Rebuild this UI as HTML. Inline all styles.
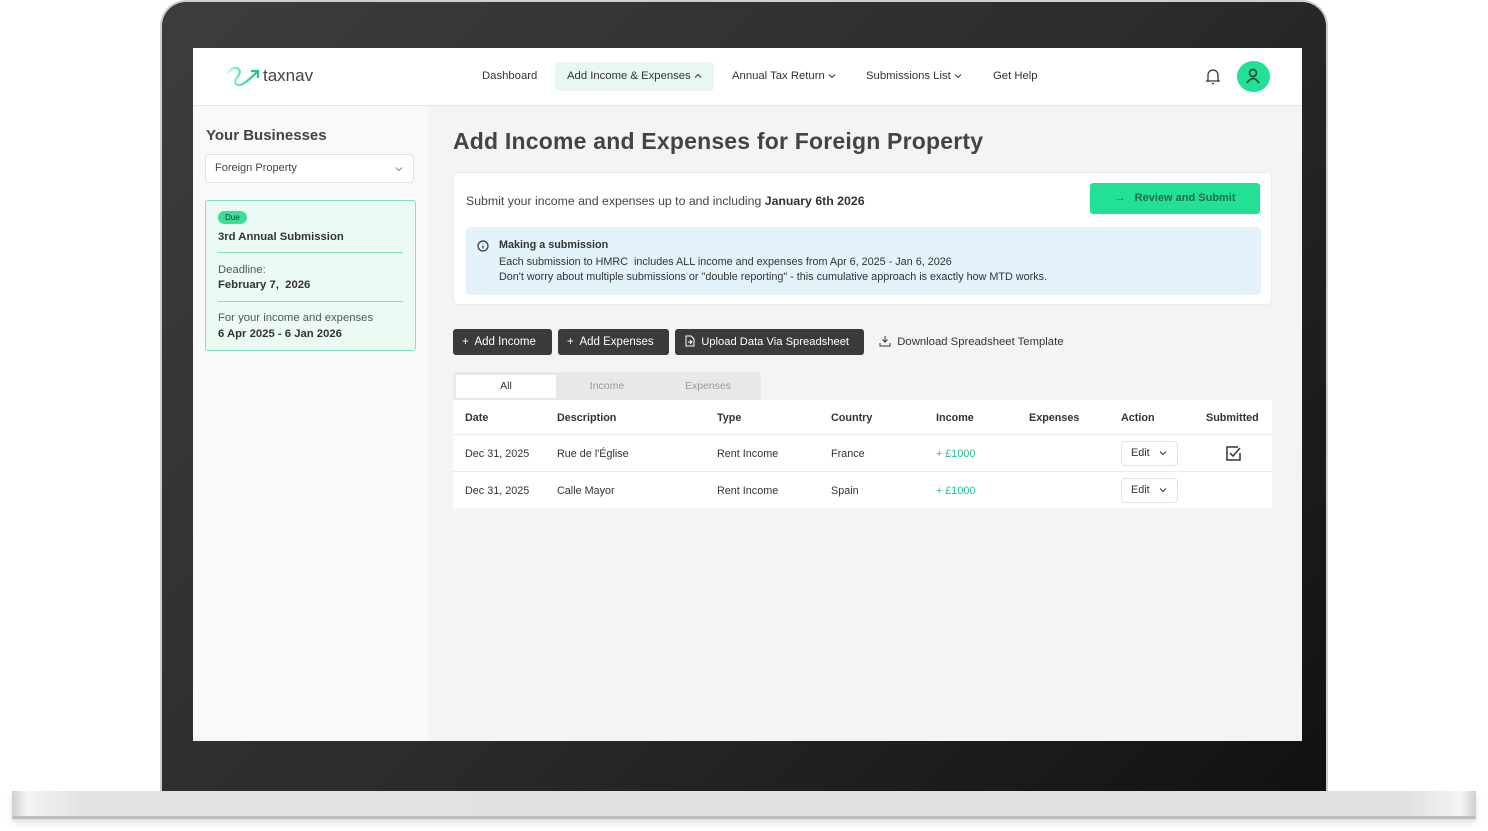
<!DOCTYPE html>
<html><head><meta charset="utf-8"><style>
*{box-sizing:border-box;margin:0;padding:0}
body{width:1488px;height:831px;background:#fff;position:relative;overflow:hidden;font-family:"Liberation Sans",sans-serif;color:#333}
.frame{position:absolute;left:160px;top:0;width:1168px;height:800px;border-radius:26px 26px 0 0;background:linear-gradient(135deg,#3d3d3d 0%,#2c2c2c 50%,#111 100%);border:2px solid #cfcfcf;border-bottom:none}
.base{position:absolute;left:12px;top:791px;width:1464px;height:28px;background:linear-gradient(90deg,#cfcfcf 0%,#f4f4f4 1%,#e2e2e2 5%,#e0e0e0 95%,#f4f4f4 99%,#cfcfcf 100%);border-bottom:3px solid #bdbdbd;box-shadow:0 4px 6px rgba(0,0,0,.12)}
.screen{position:absolute;left:193px;top:48px;width:1109px;height:693px;background:#f4f4f4;overflow:hidden}
.top{position:absolute;left:0;top:0;width:1109px;height:58px;background:#fff;border-bottom:1px solid #e5e5e5}
.logo{position:absolute;left:30px;top:12px}
.logotxt{position:absolute;left:70px;top:18px;font-size:17px;color:#444}
.nav{position:absolute;top:14px;font-size:11.3px;color:#333;height:29px;line-height:29px;white-space:nowrap}
.nav.act{background:#e8f8f1;border-radius:4px;padding:0 12px}
.chev{display:inline-block;vertical-align:middle;margin-left:3px}
.side{position:absolute;left:0;top:58px;width:235px;height:635px;background:#f9f9f9}
.h{font-weight:bold;font-size:15px;color:#444;position:absolute;left:13px;top:21px}
.sel{position:absolute;left:12px;top:48px;width:209px;height:29px;background:#fff;border:1px solid #e3e3e3;border-radius:4px;font-size:11px;line-height:27px;padding-left:9px;color:#444}
.card{position:absolute;left:12px;top:94px;width:211px;height:151px;background:#ebfaf3;border:1px solid #7ee3bb;border-radius:3px}
.badge{position:absolute;left:12px;top:10px;background:#3ddc97;border-radius:8px;font-size:8px;padding:2px 7px;color:#144}
.card .t{position:absolute;left:12px;font-size:11.3px}
.hr{position:absolute;left:12px;width:185px;height:1px;background:#7ee3bb}
.main{position:absolute;left:235px;top:58px;width:874px;height:635px}
.title{position:absolute;left:25px;top:22px;font-size:23px;font-weight:bold;color:#444;letter-spacing:.2px}
.box{position:absolute;left:25px;top:66px;width:819px;height:133px;background:#fff;border:1px solid #ebebeb;border-radius:5px}
.btnG{position:absolute;left:636px;top:10px;width:170px;height:31px;background:#22e096;border-radius:3px;font-size:11px;font-weight:bold;color:#2a6a50;line-height:31px;text-align:center}
.info{position:absolute;left:12px;top:54px;width:795px;height:68px;background:#e3f2fb;border-radius:4px;font-size:10.8px;color:#333}
.b{position:absolute;top:223px;height:26px;background:#3b3b3b;border-radius:3px;color:#fff;font-size:11.5px;line-height:26px;padding:0 9px;white-space:nowrap;overflow:hidden}
.tabs{position:absolute;left:25px;top:266px;width:308px;height:28px;background:#e8e8e8;border-radius:4px 4px 0 0}
.tab{position:absolute;top:3px;height:23px;width:100px;text-align:center;font-size:10.5px;line-height:23px;color:#999}
.tbl{position:absolute;left:25px;top:294px;width:819px;height:108px;background:#fff}
.row{position:absolute;left:0;width:819px;font-size:10.8px;color:#333;white-space:nowrap}
.row span{position:absolute}
.th{font-weight:bold;font-size:10.8px}
.edit{position:absolute;width:57px;height:25px;border:1px solid #e3e3e3;border-radius:4px;font-size:10.8px;line-height:23px;padding-left:9px}
</style></head><body>
<div class="frame"></div>
<div class="base"></div>
<div class="screen">
 <div class="top">
  <svg class="logo" width="40" height="30" viewBox="0 0 40 30"><defs><linearGradient id="g" x1="0" x2="1"><stop offset="0" stop-color="#3ddc97" stop-opacity="0"/><stop offset=".4" stop-color="#6ee8b4"/><stop offset="1" stop-color="#22c583"/></linearGradient></defs><path d="M2 16 Q10 6 14 8 Q20 11 13 19 Q10 25 17 25 Q22 24 34 12" fill="none" stroke="url(#g)" stroke-width="2.2" stroke-linecap="round"/><path d="M28 11 L35 11 L35 18" fill="none" stroke="#22c583" stroke-width="2.2"/></svg>
  <div class="logotxt">taxnav</div>
  <div class="nav" style="left:289px">Dashboard</div>
  <div class="nav act" style="left:362px">Add Income &amp; Expenses<svg class="chev" width="8" height="6" viewBox="0 0 8 6"><path d="M1 4.5L4 1.5L7 4.5" fill="none" stroke="#333" stroke-width="1"/></svg></div>
  <div class="nav" style="left:539px">Annual Tax Return<svg class="chev" width="8" height="6" viewBox="0 0 8 6"><path d="M1 1.5L4 4.5L7 1.5" fill="none" stroke="#333" stroke-width="1"/></svg></div>
  <div class="nav" style="left:673px">Submissions List<svg class="chev" width="8" height="6" viewBox="0 0 8 6"><path d="M1 1.5L4 4.5L7 1.5" fill="none" stroke="#333" stroke-width="1"/></svg></div>
  <div class="nav" style="left:800px">Get Help</div>
  <svg style="position:absolute;left:1010px;top:18px" width="20" height="20" viewBox="0 0 20 20"><path d="M5 14 V9 a5 5 0 0 1 10 0 V14 L16 15 H4 Z M9 17.5 h2" fill="none" stroke="#333" stroke-width="1.3"/></svg>
  <div style="position:absolute;left:1044px;top:13px;width:33px;height:31px;border-radius:50%;background:#22e096"></div>
  <svg style="position:absolute;left:1050px;top:18px" width="20" height="20" viewBox="0 0 20 20"><circle cx="10" cy="7" r="3.5" fill="none" stroke="#1c3b2f" stroke-width="1.5"/><path d="M4 17 q6 -9 12 0" fill="none" stroke="#1c3b2f" stroke-width="1.5"/></svg>
 </div>
 <div class="side">
  <div class="h">Your Businesses</div>
  <div class="sel">Foreign Property<svg style="position:absolute;right:10px;top:11px" width="8" height="6" viewBox="0 0 8 6"><path d="M1 1.5L4 4.5L7 1.5" fill="none" stroke="#888" stroke-width="1"/></svg></div>
  <div class="card">
   <div class="badge">Due</div>
   <div class="t" style="top:30px;font-weight:bold">3rd Annual Submission</div>
   <div class="hr" style="top:51px"></div>
   <div class="t" style="top:63px;color:#555">Deadline:</div>
   <div class="t" style="top:78px;font-weight:bold">February 7,&nbsp; 2026</div>
   <div class="hr" style="top:100px"></div>
   <div class="t" style="top:111px;color:#555">For your income and expenses</div>
   <div class="t" style="top:127px;font-weight:bold">6 Apr 2025 - 6 Jan 2026</div>
  </div>
 </div>
 <div class="main">
  <div class="title">Add Income and Expenses for Foreign Property</div>
  <div class="box">
   <div style="position:absolute;left:12px;top:21px;font-size:12.3px;color:#444">Submit your income and expenses up to and including <b style="color:#333">January 6th 2026</b></div>
   <div class="btnG">→&nbsp;&nbsp; Review and Submit</div>
   <div class="info">
    <svg style="position:absolute;left:11px;top:13px" width="12" height="12" viewBox="0 0 12 12"><circle cx="6" cy="6" r="5" fill="none" stroke="#333" stroke-width="1.2"/><path d="M6 5.5v3M6 3.5v.5" stroke="#333" stroke-width="1.2"/></svg>
    <div style="position:absolute;left:33px;top:12px;font-weight:bold">Making a submission</div>
    <div style="position:absolute;left:33px;top:29px">Each submission to HMRC&nbsp; includes ALL income and expenses from Apr 6, 2025 - Jan 6, 2026</div>
    <div style="position:absolute;left:33px;top:44px">Don't worry about multiple submissions or "double reporting" - this cumulative approach is exactly how MTD works.</div>
   </div>
  </div>
  <div class="b" style="left:25px;width:99px">+&nbsp; Add Income</div>
  <div class="b" style="left:130px;width:111px">+&nbsp; Add Expenses</div>
  <div class="b" style="left:247px;width:189px;font-size:11.2px"><svg width="11" height="12" viewBox="0 0 11 12" style="vertical-align:-2px"><path d="M2 1h5l3 3v7H2z M4 7h4M6 5l2 2-2 2" fill="none" stroke="#fff" stroke-width="1"/></svg>&nbsp; Upload Data Via Spreadsheet</div>
  <div style="position:absolute;left:451px;top:229px;font-size:11.3px;color:#333;white-space:nowrap"><svg width="12" height="12" viewBox="0 0 12 12" style="vertical-align:-2px"><path d="M6 1v6M3.5 4.5L6 7l2.5-2.5M1 8v3h10V8" fill="none" stroke="#333" stroke-width="1"/></svg>&nbsp; Download Spreadsheet Template</div>
  <div class="tabs">
   <div class="tab" style="left:3px;background:#fff;color:#333">All</div>
   <div class="tab" style="left:104px">Income</div>
   <div class="tab" style="left:205px">Expenses</div>
  </div>
  <div class="tbl">
   <div class="row th" style="top:12px"><span style="left:12px">Date</span><span style="left:104px">Description</span><span style="left:264px">Type</span><span style="left:378px">Country</span><span style="left:483px">Income</span><span style="left:576px">Expenses</span><span style="left:668px">Action</span><span style="left:753px">Submitted</span></div>
   <div style="position:absolute;top:34px;left:0;width:819px;height:1px;background:#ececec"></div>
   <div class="row" style="top:48px"><span style="left:12px">Dec 31, 2025</span><span style="left:104px">Rue de l'Église</span><span style="left:264px">Rent Income</span><span style="left:378px">France</span><span style="left:483px;color:#22c583">+ £1000</span></div>
   <div class="edit" style="left:668px;top:41px">Edit<svg style="margin-left:9px;vertical-align:middle" width="8" height="6" viewBox="0 0 8 6"><path d="M1 1.5L4 4.5L7 1.5" fill="none" stroke="#333" stroke-width="1"/></svg></div>
   <svg style="position:absolute;left:772px;top:45px" width="18" height="17" viewBox="0 0 18 17"><path d="M13 2H2v13h13V8" fill="none" stroke="#333" stroke-width="1.5"/><path d="M5 8l3 3 7-8" fill="none" stroke="#333" stroke-width="1.5"/></svg>
   <div style="position:absolute;top:71px;left:0;width:819px;height:1px;background:#ececec"></div>
   <div class="row" style="top:85px"><span style="left:12px">Dec 31, 2025</span><span style="left:104px">Calle Mayor</span><span style="left:264px">Rent Income</span><span style="left:378px">Spain</span><span style="left:483px;color:#22c583">+ £1000</span></div>
   <div class="edit" style="left:668px;top:78px">Edit<svg style="margin-left:9px;vertical-align:middle" width="8" height="6" viewBox="0 0 8 6"><path d="M1 1.5L4 4.5L7 1.5" fill="none" stroke="#333" stroke-width="1"/></svg></div>
  </div>
 </div>
</div>
</body></html>
